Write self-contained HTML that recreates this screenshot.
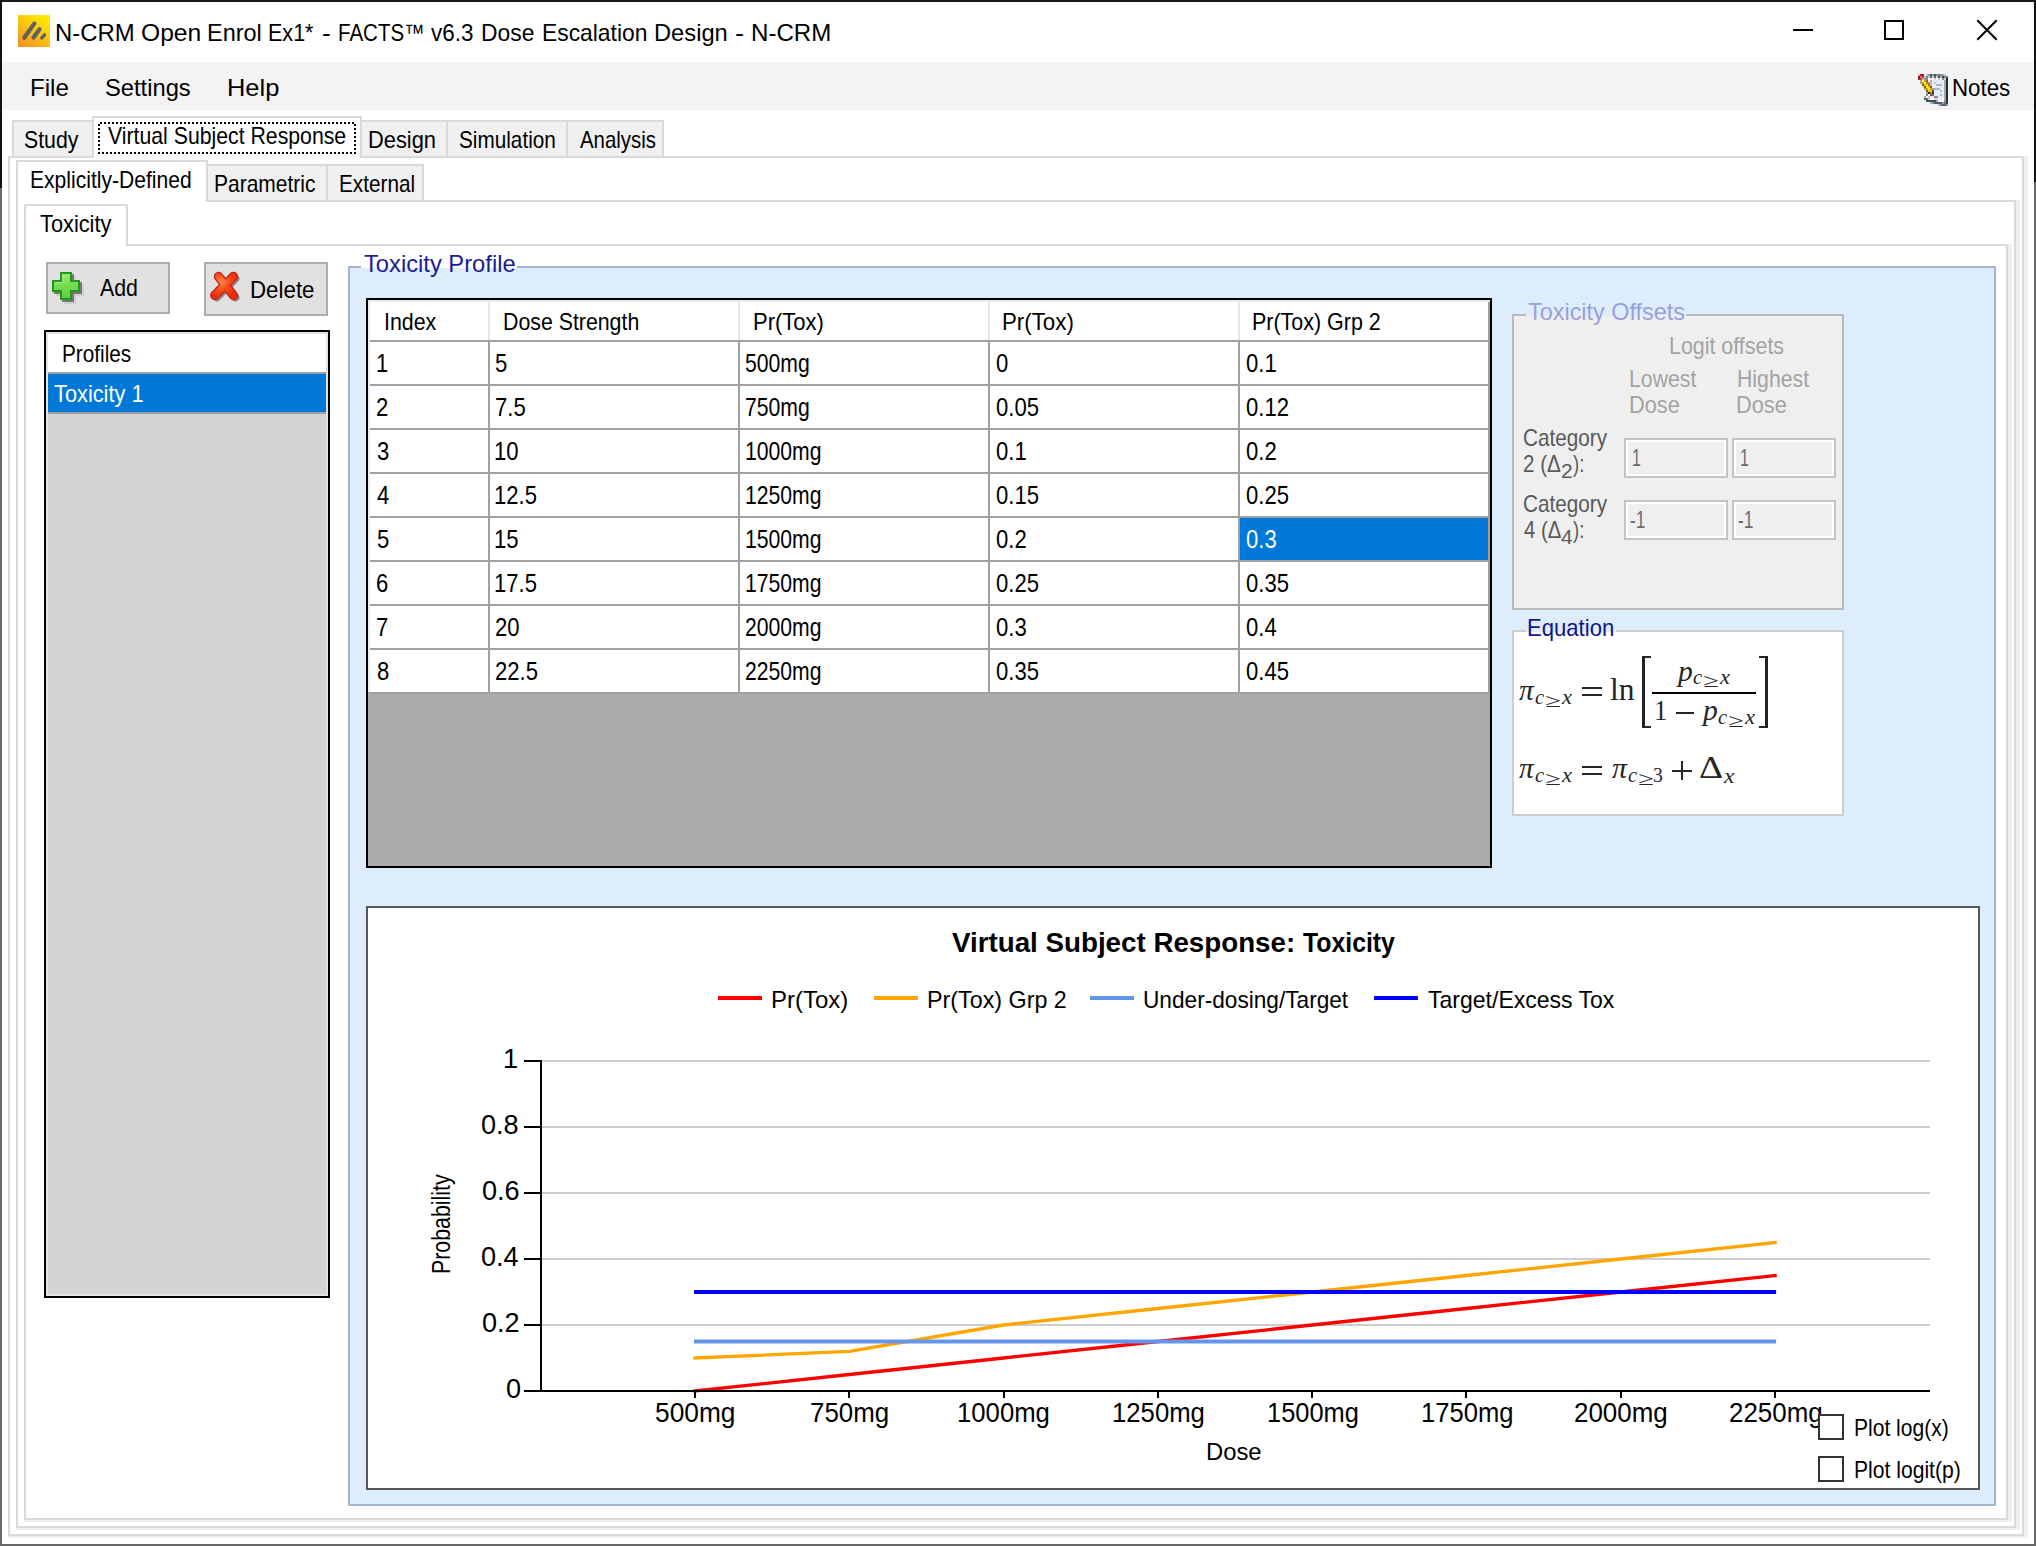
<!DOCTYPE html>
<html><head><meta charset="utf-8"><title>N-CRM Open Enrol Ex1* - FACTS v6.3 Dose Escalation Design - N-CRM</title>
<style>
html,body{margin:0;padding:0;}
body{width:2036px;height:1546px;background:#fff;position:relative;overflow:hidden;font-family:"Liberation Sans",sans-serif;}
div,span,svg{position:absolute;box-sizing:border-box;}
.t{line-height:1;white-space:pre;transform-origin:0 0;}
</style></head><body>
<!-- window frame -->
<div style="left:0px;top:0px;width:2036px;height:2px;background:#1a1a1a;"></div>
<div style="left:0px;top:0px;width:2px;height:188px;background:#111;"></div>
<div style="left:0px;top:188px;width:2px;height:1358px;background:#696969;"></div>
<div style="left:2034px;top:0px;width:2px;height:182px;background:#111;"></div>
<div style="left:2034px;top:182px;width:2px;height:1364px;background:#696969;"></div>
<div style="left:0px;top:1544px;width:2036px;height:2px;background:#696969;"></div>
<!-- title bar -->
<svg style="left:18px;top:15px" width="32" height="32" viewBox="0 0 32 32"><defs><linearGradient id="ig" x1="0.85" y1="0" x2="0.15" y2="1"><stop offset="0" stop-color="#ffec00"/><stop offset="0.5" stop-color="#f9c413"/><stop offset="1" stop-color="#f5921b"/></linearGradient></defs><rect width="32" height="32" fill="url(#ig)"/><g stroke="#606060" stroke-width="4.2" stroke-linecap="round"><path d="M6.3 22.7L16.4 8.4"/><path d="M15.6 22.5L21.5 14.2"/><path d="M23.8 22.9L26.6 19.9" stroke-width="3.4"/></g></svg>
<span class="t" style="left:55.01px;top:21px;font-size:24px;color:#000;transform:scaleX(0.9947);">N-CRM</span>
<span class="t" style="left:140.57px;top:21px;font-size:24px;color:#000;transform:scaleX(1.0250);">Open</span>
<span class="t" style="left:207.15px;top:21px;font-size:24px;color:#000;transform:scaleX(0.9771);">Enrol</span>
<span class="t" style="left:267.71px;top:21px;font-size:24px;color:#000;transform:scaleX(0.8974);">Ex1*</span>
<span class="t" style="left:321.80px;top:21px;font-size:24px;color:#000;transform:scaleX(1.1000);">-</span>
<span class="t" style="left:338.29px;top:21px;font-size:24px;color:#000;transform:scaleX(0.8549);">FACTS™</span>
<span class="t" style="left:431.30px;top:21px;font-size:24px;color:#000;transform:scaleX(0.9333);">v6.3</span>
<span class="t" style="left:480.99px;top:21px;font-size:24px;color:#000;transform:scaleX(0.9528);">Dose</span>
<span class="t" style="left:541.90px;top:21px;font-size:24px;color:#000;transform:scaleX(0.9520);">Escalation</span>
<span class="t" style="left:654.23px;top:21px;font-size:24px;color:#000;transform:scaleX(0.9873);">Design</span>
<span class="t" style="left:735.47px;top:21px;font-size:24px;color:#000;transform:scaleX(1.1333);">-</span>
<span class="t" style="left:751.09px;top:21px;font-size:24px;color:#000;transform:scaleX(1.0039);">N-CRM</span>
<div style="left:1793px;top:29px;width:20px;height:2px;background:#000;"></div>
<div style="left:1884px;top:20px;width:20px;height:20px;border:2px solid #000;"></div>
<svg style="left:1976px;top:19px" width="22" height="22" viewBox="0 0 22 22"><path d="M1.3 1.3L20.7 20.7M20.7 1.3L1.3 20.7" stroke="#000" stroke-width="2" fill="none"/></svg>
<!-- menu bar -->
<div style="left:2px;top:62px;width:2032px;height:48px;background:#f3f3f3;"></div>
<span class="t" style="left:30.39px;top:76px;font-size:24px;color:#000;transform:scaleX(1.0056);">File</span>
<span class="t" style="left:105.41px;top:76px;font-size:24px;color:#000;transform:scaleX(0.9882);">Settings</span>
<span class="t" style="left:226.58px;top:76px;font-size:24px;color:#000;transform:scaleX(1.0595);">Help</span>
<span class="t" style="left:1952.14px;top:76px;font-size:24px;color:#000;transform:scaleX(0.9283);">Notes</span>
<svg style="left:1918px;top:74px" width="30" height="32" viewBox="0 0 15 16" shape-rendering="crispEdges"><rect x="0" y="0" width="1" height="1" fill="#e8b0b0"/><rect x="1" y="0" width="1" height="1" fill="#a02820"/><rect x="2" y="0" width="1" height="1" fill="#902020"/><rect x="4" y="0" width="1" height="1" fill="#c0c4c8"/><rect x="5" y="0" width="1" height="1" fill="#909498"/><rect x="6" y="0" width="1" height="1" fill="#50565c"/><rect x="7" y="0" width="1" height="1" fill="#8a8e92"/><rect x="8" y="0" width="1" height="1" fill="#50565c"/><rect x="9" y="0" width="1" height="1" fill="#8a8e92"/><rect x="10" y="0" width="1" height="1" fill="#70767c"/><rect x="11" y="0" width="1" height="1" fill="#8a8e92"/><rect x="12" y="0" width="1" height="1" fill="#9a9ea2"/><rect x="13" y="0" width="1" height="1" fill="#c0c4c8"/><rect x="0" y="1" width="1" height="1" fill="#8a1010"/><rect x="1" y="1" width="1" height="1" fill="#ff5a4a"/><rect x="2" y="1" width="1" height="1" fill="#c03830"/><rect x="3" y="1" width="1" height="1" fill="#b8c4cc"/><rect x="4" y="1" width="1" height="1" fill="#7a848e"/><rect x="5" y="1" width="1" height="1" fill="#c4ccd4"/><rect x="6" y="1" width="1" height="1" fill="#5a646e"/><rect x="7" y="1" width="1" height="1" fill="#c4ccd4"/><rect x="8" y="1" width="1" height="1" fill="#5a646e"/><rect x="9" y="1" width="1" height="1" fill="#c4ccd4"/><rect x="10" y="1" width="1" height="1" fill="#4a545e"/><rect x="11" y="1" width="1" height="1" fill="#b0b8c0"/><rect x="12" y="1" width="1" height="1" fill="#3a444e"/><rect x="13" y="1" width="1" height="1" fill="#7a848e"/><rect x="14" y="1" width="1" height="1" fill="#6a7480"/><rect x="0" y="2" width="1" height="1" fill="#7a4040"/><rect x="1" y="2" width="1" height="1" fill="#c84848"/><rect x="2" y="2" width="1" height="1" fill="#a8b8d0"/><rect x="3" y="2" width="1" height="1" fill="#a89878"/><rect x="4" y="2" width="1" height="1" fill="#988860"/><rect x="5" y="2" width="1" height="1" fill="#ffffff"/><rect x="6" y="2" width="1" height="1" fill="#e0e4e8"/><rect x="7" y="2" width="1" height="1" fill="#ffffff"/><rect x="8" y="2" width="1" height="1" fill="#d0d4d8"/><rect x="9" y="2" width="1" height="1" fill="#ffffff"/><rect x="10" y="2" width="1" height="1" fill="#d0d4d8"/><rect x="11" y="2" width="1" height="1" fill="#ffffff"/><rect x="12" y="2" width="1" height="1" fill="#808a94"/><rect x="13" y="2" width="1" height="1" fill="#d0d6dc"/><rect x="14" y="2" width="1" height="1" fill="#1a2430"/><rect x="1" y="3" width="1" height="1" fill="#a0a8a8"/><rect x="2" y="3" width="1" height="1" fill="#f4e8c0"/><rect x="3" y="3" width="1" height="1" fill="#e0a000"/><rect x="4" y="3" width="1" height="1" fill="#906010"/><rect x="5" y="3" width="1" height="1" fill="#ffffff"/><rect x="6" y="3" width="1" height="1" fill="#e8a8a8"/><rect x="7" y="3" width="1" height="1" fill="#e8ecf4"/><rect x="8" y="3" width="1" height="1" fill="#e8ecf4"/><rect x="9" y="3" width="1" height="1" fill="#e8ecf4"/><rect x="10" y="3" width="1" height="1" fill="#e8ecf4"/><rect x="11" y="3" width="1" height="1" fill="#e8ecf4"/><rect x="12" y="3" width="1" height="1" fill="#e8ecf4"/><rect x="13" y="3" width="1" height="1" fill="#a0aab6"/><rect x="14" y="3" width="1" height="1" fill="#202c38"/><rect x="1" y="4" width="1" height="1" fill="#b0a080"/><rect x="2" y="4" width="1" height="1" fill="#e0a000"/><rect x="3" y="4" width="1" height="1" fill="#fff020"/><rect x="4" y="4" width="1" height="1" fill="#c08800"/><rect x="5" y="4" width="1" height="1" fill="#a09878"/><rect x="6" y="4" width="1" height="1" fill="#e8a8a8"/><rect x="7" y="4" width="1" height="1" fill="#e8ecf4"/><rect x="8" y="4" width="1" height="1" fill="#b8c8dc"/><rect x="9" y="4" width="1" height="1" fill="#e8ecf4"/><rect x="10" y="4" width="1" height="1" fill="#e8ecf4"/><rect x="11" y="4" width="1" height="1" fill="#e8ecf4"/><rect x="12" y="4" width="1" height="1" fill="#e8ecf4"/><rect x="13" y="4" width="1" height="1" fill="#a0aab6"/><rect x="14" y="4" width="1" height="1" fill="#202c38"/><rect x="2" y="5" width="1" height="1" fill="#806020"/><rect x="3" y="5" width="1" height="1" fill="#f0c010"/><rect x="4" y="5" width="1" height="1" fill="#ffd810"/><rect x="5" y="5" width="1" height="1" fill="#a07010"/><rect x="6" y="5" width="1" height="1" fill="#e8a8a8"/><rect x="7" y="5" width="1" height="1" fill="#e8ecf4"/><rect x="8" y="5" width="1" height="1" fill="#e8ecf4"/><rect x="9" y="5" width="1" height="1" fill="#a8b8d0"/><rect x="10" y="5" width="1" height="1" fill="#a8b8d0"/><rect x="11" y="5" width="1" height="1" fill="#a8b8d0"/><rect x="12" y="5" width="1" height="1" fill="#e8ecf4"/><rect x="13" y="5" width="1" height="1" fill="#a0aab6"/><rect x="14" y="5" width="1" height="1" fill="#202c38"/><rect x="2" y="6" width="1" height="1" fill="#e0d8c0"/><rect x="3" y="6" width="1" height="1" fill="#806020"/><rect x="4" y="6" width="1" height="1" fill="#fff020"/><rect x="5" y="6" width="1" height="1" fill="#f0c010"/><rect x="6" y="6" width="1" height="1" fill="#8a5a10"/><rect x="7" y="6" width="1" height="1" fill="#e8ecf4"/><rect x="8" y="6" width="1" height="1" fill="#e8ecf4"/><rect x="9" y="6" width="1" height="1" fill="#e8ecf4"/><rect x="10" y="6" width="1" height="1" fill="#e8ecf4"/><rect x="11" y="6" width="1" height="1" fill="#e8ecf4"/><rect x="12" y="6" width="1" height="1" fill="#e8ecf4"/><rect x="13" y="6" width="1" height="1" fill="#a0aab6"/><rect x="14" y="6" width="1" height="1" fill="#202c38"/><rect x="3" y="7" width="1" height="1" fill="#b0a070"/><rect x="4" y="7" width="1" height="1" fill="#e0a000"/><rect x="5" y="7" width="1" height="1" fill="#fff020"/><rect x="6" y="7" width="1" height="1" fill="#e0a000"/><rect x="7" y="7" width="1" height="1" fill="#a09878"/><rect x="8" y="7" width="1" height="1" fill="#a8b8d0"/><rect x="9" y="7" width="1" height="1" fill="#a8b8d0"/><rect x="10" y="7" width="1" height="1" fill="#a8b8d0"/><rect x="11" y="7" width="1" height="1" fill="#e8ecf4"/><rect x="12" y="7" width="1" height="1" fill="#e8ecf4"/><rect x="13" y="7" width="1" height="1" fill="#a0aab6"/><rect x="14" y="7" width="1" height="1" fill="#202c38"/><rect x="4" y="8" width="1" height="1" fill="#806020"/><rect x="5" y="8" width="1" height="1" fill="#f0c010"/><rect x="6" y="8" width="1" height="1" fill="#f0c010"/><rect x="7" y="8" width="1" height="1" fill="#605840"/><rect x="8" y="8" width="1" height="1" fill="#e8ecf4"/><rect x="9" y="8" width="1" height="1" fill="#e8ecf4"/><rect x="10" y="8" width="1" height="1" fill="#e8ecf4"/><rect x="11" y="8" width="1" height="1" fill="#a8b8d0"/><rect x="12" y="8" width="1" height="1" fill="#e8ecf4"/><rect x="13" y="8" width="1" height="1" fill="#a0aab6"/><rect x="14" y="8" width="1" height="1" fill="#202c38"/><rect x="4" y="9" width="1" height="1" fill="#a0a8a8"/><rect x="5" y="9" width="1" height="1" fill="#302818"/><rect x="6" y="9" width="1" height="1" fill="#a89020"/><rect x="7" y="9" width="1" height="1" fill="#383428"/><rect x="8" y="9" width="1" height="1" fill="#e8ecf4"/><rect x="9" y="9" width="1" height="1" fill="#e8ecf4"/><rect x="10" y="9" width="1" height="1" fill="#e8ecf4"/><rect x="11" y="9" width="1" height="1" fill="#e8ecf4"/><rect x="12" y="9" width="1" height="1" fill="#e8ecf4"/><rect x="13" y="9" width="1" height="1" fill="#a0aab6"/><rect x="14" y="9" width="1" height="1" fill="#202c38"/><rect x="4" y="10" width="1" height="1" fill="#8088a0"/><rect x="5" y="10" width="1" height="1" fill="#ffffff"/><rect x="6" y="10" width="1" height="1" fill="#705060"/><rect x="7" y="10" width="1" height="1" fill="#707878"/><rect x="8" y="10" width="1" height="1" fill="#e8ecf4"/><rect x="9" y="10" width="1" height="1" fill="#e8ecf4"/><rect x="10" y="10" width="1" height="1" fill="#e8ecf4"/><rect x="11" y="10" width="1" height="1" fill="#a8b8d0"/><rect x="12" y="10" width="1" height="1" fill="#e8ecf4"/><rect x="13" y="10" width="1" height="1" fill="#a0aab6"/><rect x="14" y="10" width="1" height="1" fill="#202c38"/><rect x="3" y="11" width="1" height="1" fill="#a0a8a8"/><rect x="4" y="11" width="1" height="1" fill="#ffffff"/><rect x="5" y="11" width="1" height="1" fill="#f0b0a8"/><rect x="6" y="11" width="1" height="1" fill="#f8d8d8"/><rect x="7" y="11" width="1" height="1" fill="#e8ecf4"/><rect x="8" y="11" width="1" height="1" fill="#9090a8"/><rect x="9" y="11" width="1" height="1" fill="#9090a8"/><rect x="10" y="11" width="1" height="1" fill="#e8ecf4"/><rect x="11" y="11" width="1" height="1" fill="#e8ecf4"/><rect x="12" y="11" width="1" height="1" fill="#e8ecf4"/><rect x="13" y="11" width="1" height="1" fill="#a0aab6"/><rect x="14" y="11" width="1" height="1" fill="#202c38"/><rect x="3" y="12" width="1" height="1" fill="#606468"/><rect x="4" y="12" width="1" height="1" fill="#586878"/><rect x="5" y="12" width="1" height="1" fill="#c0d0dc"/><rect x="6" y="12" width="1" height="1" fill="#ffffff"/><rect x="7" y="12" width="1" height="1" fill="#ffffff"/><rect x="8" y="12" width="1" height="1" fill="#d8d8d8"/><rect x="9" y="12" width="1" height="1" fill="#d8d8d8"/><rect x="10" y="12" width="1" height="1" fill="#e8ecf4"/><rect x="11" y="12" width="1" height="1" fill="#e8ecf4"/><rect x="12" y="12" width="1" height="1" fill="#ffffff"/><rect x="13" y="12" width="1" height="1" fill="#a0aab6"/><rect x="14" y="12" width="1" height="1" fill="#202c38"/><rect x="4" y="13" width="1" height="1" fill="#405060"/><rect x="5" y="13" width="1" height="1" fill="#405060"/><rect x="6" y="13" width="1" height="1" fill="#405060"/><rect x="7" y="13" width="1" height="1" fill="#405060"/><rect x="8" y="13" width="1" height="1" fill="#405060"/><rect x="9" y="13" width="1" height="1" fill="#90a0b0"/><rect x="10" y="13" width="1" height="1" fill="#ffffff"/><rect x="11" y="13" width="1" height="1" fill="#ffffff"/><rect x="12" y="13" width="1" height="1" fill="#ffffff"/><rect x="13" y="13" width="1" height="1" fill="#8a96a4"/><rect x="14" y="13" width="1" height="1" fill="#2a3642"/><rect x="6" y="14" width="1" height="1" fill="#b0b8c0"/><rect x="7" y="14" width="1" height="1" fill="#8a96a4"/><rect x="8" y="14" width="1" height="1" fill="#506070"/><rect x="9" y="14" width="1" height="1" fill="#506070"/><rect x="10" y="14" width="1" height="1" fill="#506070"/><rect x="11" y="14" width="1" height="1" fill="#506070"/><rect x="12" y="14" width="1" height="1" fill="#90a0b0"/><rect x="13" y="14" width="1" height="1" fill="#6a7480"/><rect x="14" y="14" width="1" height="1" fill="#36424e"/><rect x="10" y="15" width="1" height="1" fill="#b0b8c0"/><rect x="11" y="15" width="1" height="1" fill="#7a8894"/><rect x="12" y="15" width="1" height="1" fill="#506070"/><rect x="13" y="15" width="1" height="1" fill="#506070"/><rect x="14" y="15" width="1" height="1" fill="#8a96a4"/></svg>
<!-- main tabs -->
<div style="left:2024px;top:156px;width:4px;height:1382px;background:#f0f0f0;"></div>
<div style="left:8px;top:1536px;width:2020px;height:2px;background:#f0f0f0;"></div>
<div style="left:8px;top:156px;width:2016px;height:1380px;border:2px solid #d9d9d9;"></div>
<div style="left:12px;top:120px;width:82px;height:36px;background:#f0f0f0;border-top:2px solid #d9d9d9;border-right:2px solid #d9d9d9;"></div>
<div style="left:12px;top:120px;width:2px;height:36px;background:#d9d9d9;"></div>
<div style="left:362px;top:120px;width:86px;height:36px;background:#f0f0f0;border-top:2px solid #d9d9d9;border-right:2px solid #d9d9d9;"></div>
<div style="left:448px;top:120px;width:120px;height:36px;background:#f0f0f0;border-top:2px solid #d9d9d9;border-right:2px solid #d9d9d9;"></div>
<div style="left:568px;top:120px;width:96px;height:36px;background:#f0f0f0;border-top:2px solid #d9d9d9;border-right:2px solid #d9d9d9;"></div>
<div style="left:92px;top:116px;width:270px;height:42px;background:#fff;border:2px solid #d9d9d9;border-bottom:none;"></div>
<div style="left:100px;top:122px;width:256px;height:2px;background:repeating-linear-gradient(90deg,#000 0 2px,transparent 2px 4px);"></div>
<div style="left:98px;top:152px;width:258px;height:2px;background:repeating-linear-gradient(90deg,#000 0 2px,transparent 2px 4px);"></div>
<div style="left:98px;top:124px;width:2px;height:28px;background:repeating-linear-gradient(180deg,#000 0 2px,transparent 2px 4px);"></div>
<div style="left:354px;top:124px;width:2px;height:28px;background:repeating-linear-gradient(180deg,#000 0 2px,transparent 2px 4px);"></div>
<span class="t" style="left:23.51px;top:128px;font-size:24px;color:#000;transform:scaleX(0.8863);">Study</span>
<span class="t" style="left:107.78px;top:123.5px;font-size:24px;color:#000;transform:scaleX(0.8852);">Virtual Subject Response</span>
<span class="t" style="left:368.18px;top:128px;font-size:24px;color:#000;transform:scaleX(0.9099);">Design</span>
<span class="t" style="left:459.34px;top:128px;font-size:24px;color:#000;transform:scaleX(0.8639);">Simulation</span>
<span class="t" style="left:580.40px;top:128px;font-size:24px;color:#000;transform:scaleX(0.8497);">Analysis</span>
<!-- response tabs -->
<div style="left:2016px;top:200px;width:4px;height:1330px;background:#f0f0f0;"></div>
<div style="left:16px;top:1528px;width:2004px;height:2px;background:#f0f0f0;"></div>
<div style="left:16px;top:200px;width:2000px;height:1328px;border:2px solid #d9d9d9;"></div>
<div style="left:208px;top:164px;width:120px;height:36px;background:#f0f0f0;border-top:2px solid #d9d9d9;border-right:2px solid #d9d9d9;"></div>
<div style="left:328px;top:164px;width:96px;height:36px;background:#f0f0f0;border-top:2px solid #d9d9d9;border-right:2px solid #d9d9d9;"></div>
<div style="left:16px;top:160px;width:192px;height:42px;background:#fff;border:2px solid #d9d9d9;border-bottom:none;"></div>
<span class="t" style="left:30.24px;top:167.5px;font-size:24px;color:#000;transform:scaleX(0.8781);">Explicitly-Defined</span>
<span class="t" style="left:214.25px;top:171.5px;font-size:24px;color:#000;transform:scaleX(0.8742);">Parametric</span>
<span class="t" style="left:339.27px;top:171.5px;font-size:24px;color:#000;transform:scaleX(0.8639);">External</span>
<!-- endpoint tabs -->
<div style="left:2008px;top:244px;width:4px;height:1278px;background:#f0f0f0;"></div>
<div style="left:24px;top:1520px;width:1988px;height:2px;background:#f0f0f0;"></div>
<div style="left:24px;top:244px;width:1984px;height:1276px;border:2px solid #d9d9d9;"></div>
<div style="left:24px;top:204px;width:104px;height:42px;background:#fff;border:2px solid #d9d9d9;border-bottom:none;"></div>
<span class="t" style="left:39.55px;top:211.5px;font-size:24px;color:#000;transform:scaleX(0.9073);">Toxicity</span>
<!-- add / delete buttons -->
<div style="left:46px;top:262px;width:124px;height:52px;background:#e1e1e1;border:2px solid #adadad;"></div>
<div style="left:204px;top:262px;width:124px;height:54px;background:#e1e1e1;border:2px solid #adadad;"></div>
<svg style="left:52px;top:272px" width="32" height="32" viewBox="0 0 32 32"><defs><linearGradient id="pg" x1="0" y1="0" x2="0" y2="1"><stop offset="0" stop-color="#9aea78"/><stop offset="0.5" stop-color="#74dc4c"/><stop offset="1" stop-color="#5fce3c"/></linearGradient></defs><path d="M12 4H24V12H32V24H24V32H12V24H4V12H12Z" fill="#808080" opacity="0.18"/><path d="M10 2H22V10H30V22H22V30H10V22H2V10H10Z" fill="#6a646a" opacity="0.85"/><path d="M9 1H19V9H27V19H19V27H9V19H1V9H9Z" fill="url(#pg)" stroke="#1f9a1c" stroke-width="2"/><path d="M10.5 3V10.5H3" fill="none" stroke="#b4f09a" stroke-width="1" opacity="0.8"/></svg>
<span class="t" style="left:99.90px;top:276px;font-size:24px;color:#000;transform:scaleX(0.8878);">Add</span>
<svg style="left:208px;top:270px" width="36" height="36" viewBox="0 0 36 36"><defs><radialGradient id="xg" cx="0.35" cy="0.3" r="0.8"><stop offset="0" stop-color="#ff8a4a"/><stop offset="0.5" stop-color="#f8501c"/><stop offset="1" stop-color="#e8300c"/></radialGradient></defs><path d="M10.6 6.6L25.4 25.4M25.4 6.6L6.8 25.4" stroke="#5a5a5a" stroke-width="8" stroke-linecap="round" opacity="0.65" transform="translate(2,2)"/><path d="M10.6 6.6L25.4 25.4M25.4 6.6L6.8 25.4" stroke="#cf2020" stroke-width="9.6" stroke-linecap="round"/><path d="M10.6 6.6L25.4 25.4M25.4 6.6L6.8 25.4" stroke="url(#xg)" stroke-width="6.8" stroke-linecap="round"/></svg>
<span class="t" style="left:250.34px;top:278px;font-size:24px;color:#000;transform:scaleX(0.9298);">Delete</span>
<!-- profiles list -->
<div style="left:44px;top:330px;width:286px;height:968px;background:#d3d3d3;border:2px solid #000;"></div>
<div style="left:46px;top:332px;width:282px;height:964px;border:2px solid #e3e3e3;"></div>
<div style="left:48px;top:334px;width:278px;height:38px;background:#fff;"></div>
<div style="left:48px;top:372px;width:278px;height:2px;background:#a0a0a0;"></div>
<div style="left:48px;top:374px;width:278px;height:38px;background:#0078d7;"></div>
<div style="left:48px;top:412px;width:278px;height:2px;background:#a0a0a0;"></div>
<span class="t" style="left:62.07px;top:342px;font-size:24px;color:#000;transform:scaleX(0.8647);">Profiles</span>
<span class="t" style="left:53.95px;top:382px;font-size:24px;color:#fff;transform:scaleX(0.9072);">Toxicity 1</span>
<!-- Toxicity Profile group -->
<div style="left:348px;top:266px;width:1648px;height:1240px;background:#deedfd;border:2px solid #a3b5cc;"></div>
<div style="left:361px;top:260px;width:156px;height:10px;background:#fff;"></div>
<div style="left:361px;top:268px;width:156px;height:4px;background:#deedfd;"></div>
<span class="t" style="left:363.81px;top:251.5px;font-size:24px;color:#1c1c96;transform:scaleX(0.9885);">Toxicity Profile</span>
<!-- dose table -->
<div style="left:366px;top:298px;width:1126px;height:570px;background:#ababab;border:2px solid #000;"></div>
<div style="left:368px;top:300px;width:1122px;height:2px;background:#ececec;"></div>
<div style="left:368px;top:300px;width:2px;height:392px;background:#ececec;"></div>
<div style="left:370px;top:302px;width:1118px;height:38px;background:#fff;"></div>
<div style="left:370px;top:342px;width:1118px;height:350px;background:#fff;"></div>
<div style="left:488px;top:302px;width:2px;height:38px;background:#e5e5e5;"></div>
<div style="left:488px;top:340px;width:2px;height:352px;background:#a0a0a0;"></div>
<div style="left:738px;top:302px;width:2px;height:38px;background:#e5e5e5;"></div>
<div style="left:738px;top:340px;width:2px;height:352px;background:#a0a0a0;"></div>
<div style="left:988px;top:302px;width:2px;height:38px;background:#e5e5e5;"></div>
<div style="left:988px;top:340px;width:2px;height:352px;background:#a0a0a0;"></div>
<div style="left:1238px;top:302px;width:2px;height:38px;background:#e5e5e5;"></div>
<div style="left:1238px;top:340px;width:2px;height:352px;background:#a0a0a0;"></div>
<div style="left:1488px;top:302px;width:2px;height:390px;background:#a0a0a0;"></div>
<div style="left:370px;top:340px;width:1120px;height:2px;background:#a0a0a0;"></div>
<div style="left:370px;top:384px;width:1120px;height:2px;background:#a0a0a0;"></div>
<div style="left:370px;top:428px;width:1120px;height:2px;background:#a0a0a0;"></div>
<div style="left:370px;top:472px;width:1120px;height:2px;background:#a0a0a0;"></div>
<div style="left:370px;top:516px;width:1120px;height:2px;background:#a0a0a0;"></div>
<div style="left:370px;top:560px;width:1120px;height:2px;background:#a0a0a0;"></div>
<div style="left:370px;top:604px;width:1120px;height:2px;background:#a0a0a0;"></div>
<div style="left:370px;top:648px;width:1120px;height:2px;background:#a0a0a0;"></div>
<div style="left:370px;top:692px;width:1120px;height:2px;background:#a0a0a0;"></div>
<div style="left:1240px;top:518px;width:248px;height:42px;background:#0078d7;"></div>
<span class="t" style="left:384.40px;top:310px;font-size:24px;color:#000;transform:scaleX(0.8907);">Index</span>
<span class="t" style="left:503.22px;top:310px;font-size:24px;color:#000;transform:scaleX(0.8881);">Dose Strength</span>
<span class="t" style="left:752.57px;top:310px;font-size:24px;color:#000;transform:scaleX(0.9166);">Pr(Tox)</span>
<span class="t" style="left:1002.14px;top:310px;font-size:24px;color:#000;transform:scaleX(0.9288);">Pr(Tox)</span>
<span class="t" style="left:1252.41px;top:310px;font-size:24px;color:#000;transform:scaleX(0.8943);">Pr(Tox) Grp 2</span>
<span class="t" style="left:375.73px;top:350.5px;font-size:25px;color:#000;transform:scaleX(0.8830);">1</span>
<span class="t" style="left:495.22px;top:350.5px;font-size:25px;color:#000;transform:scaleX(0.8830);">5</span>
<span class="t" style="left:745.35px;top:350.5px;font-size:25px;color:#000;transform:scaleX(0.8470);">500mg</span>
<span class="t" style="left:995.72px;top:350.5px;font-size:25px;color:#000;transform:scaleX(0.8830);">0</span>
<span class="t" style="left:1246.02px;top:350.5px;font-size:25px;color:#000;transform:scaleX(0.8830);">0.1</span>
<span class="t" style="left:376.40px;top:394.5px;font-size:25px;color:#000;transform:scaleX(0.8830);">2</span>
<span class="t" style="left:495.00px;top:394.5px;font-size:25px;color:#000;transform:scaleX(0.8830);">7.5</span>
<span class="t" style="left:745.14px;top:394.5px;font-size:25px;color:#000;transform:scaleX(0.8470);">750mg</span>
<span class="t" style="left:995.72px;top:394.5px;font-size:25px;color:#000;transform:scaleX(0.8830);">0.05</span>
<span class="t" style="left:1246.02px;top:394.5px;font-size:25px;color:#000;transform:scaleX(0.8830);">0.12</span>
<span class="t" style="left:376.62px;top:438.5px;font-size:25px;color:#000;transform:scaleX(0.8830);">3</span>
<span class="t" style="left:494.33px;top:438.5px;font-size:25px;color:#000;transform:scaleX(0.8830);">10</span>
<span class="t" style="left:744.51px;top:438.5px;font-size:25px;color:#000;transform:scaleX(0.8470);">1000mg</span>
<span class="t" style="left:995.72px;top:438.5px;font-size:25px;color:#000;transform:scaleX(0.8830);">0.1</span>
<span class="t" style="left:1246.02px;top:438.5px;font-size:25px;color:#000;transform:scaleX(0.8830);">0.2</span>
<span class="t" style="left:377.06px;top:482.5px;font-size:25px;color:#000;transform:scaleX(0.8830);">4</span>
<span class="t" style="left:494.33px;top:482.5px;font-size:25px;color:#000;transform:scaleX(0.8830);">12.5</span>
<span class="t" style="left:744.51px;top:482.5px;font-size:25px;color:#000;transform:scaleX(0.8470);">1250mg</span>
<span class="t" style="left:995.72px;top:482.5px;font-size:25px;color:#000;transform:scaleX(0.8830);">0.15</span>
<span class="t" style="left:1246.02px;top:482.5px;font-size:25px;color:#000;transform:scaleX(0.8830);">0.25</span>
<span class="t" style="left:376.62px;top:526.5px;font-size:25px;color:#000;transform:scaleX(0.8830);">5</span>
<span class="t" style="left:494.33px;top:526.5px;font-size:25px;color:#000;transform:scaleX(0.8830);">15</span>
<span class="t" style="left:744.51px;top:526.5px;font-size:25px;color:#000;transform:scaleX(0.8470);">1500mg</span>
<span class="t" style="left:995.72px;top:526.5px;font-size:25px;color:#000;transform:scaleX(0.8830);">0.2</span>
<span class="t" style="left:1246.02px;top:526.5px;font-size:25px;color:#fff;transform:scaleX(0.8830);">0.3</span>
<span class="t" style="left:376.40px;top:570.5px;font-size:25px;color:#000;transform:scaleX(0.8830);">6</span>
<span class="t" style="left:494.33px;top:570.5px;font-size:25px;color:#000;transform:scaleX(0.8830);">17.5</span>
<span class="t" style="left:744.51px;top:570.5px;font-size:25px;color:#000;transform:scaleX(0.8470);">1750mg</span>
<span class="t" style="left:995.72px;top:570.5px;font-size:25px;color:#000;transform:scaleX(0.8830);">0.25</span>
<span class="t" style="left:1246.02px;top:570.5px;font-size:25px;color:#000;transform:scaleX(0.8830);">0.35</span>
<span class="t" style="left:376.40px;top:614.5px;font-size:25px;color:#000;transform:scaleX(0.8830);">7</span>
<span class="t" style="left:495.00px;top:614.5px;font-size:25px;color:#000;transform:scaleX(0.8830);">20</span>
<span class="t" style="left:745.14px;top:614.5px;font-size:25px;color:#000;transform:scaleX(0.8470);">2000mg</span>
<span class="t" style="left:995.72px;top:614.5px;font-size:25px;color:#000;transform:scaleX(0.8830);">0.3</span>
<span class="t" style="left:1246.02px;top:614.5px;font-size:25px;color:#000;transform:scaleX(0.8830);">0.4</span>
<span class="t" style="left:376.62px;top:658.5px;font-size:25px;color:#000;transform:scaleX(0.8830);">8</span>
<span class="t" style="left:495.00px;top:658.5px;font-size:25px;color:#000;transform:scaleX(0.8830);">22.5</span>
<span class="t" style="left:745.14px;top:658.5px;font-size:25px;color:#000;transform:scaleX(0.8470);">2250mg</span>
<span class="t" style="left:995.72px;top:658.5px;font-size:25px;color:#000;transform:scaleX(0.8830);">0.35</span>
<span class="t" style="left:1246.02px;top:658.5px;font-size:25px;color:#000;transform:scaleX(0.8830);">0.45</span>
<!-- Toxicity Offsets group -->
<div style="left:1512px;top:314px;width:332px;height:296px;background:#efefef;border:2px solid #b9b9b9;"></div>
<div style="left:1526px;top:308px;width:160px;height:10px;background:#deedfd;"></div>
<div style="left:1526px;top:316px;width:160px;height:4px;background:#efefef;"></div>
<span class="t" style="left:1527.81px;top:300px;font-size:24px;color:#9aa0dc;transform:scaleX(0.9759);">Toxicity Offsets</span>
<span class="t" style="left:1668.52px;top:333.5px;font-size:24px;color:#a3a3a3;transform:scaleX(0.8919);">Logit offsets</span>
<span class="t" style="left:1628.73px;top:367px;font-size:24px;color:#a3a3a3;transform:scaleX(0.8851);">Lowest</span>
<span class="t" style="left:1628.68px;top:393px;font-size:24px;color:#a3a3a3;transform:scaleX(0.9075);">Dose</span>
<span class="t" style="left:1736.53px;top:367px;font-size:24px;color:#a3a3a3;transform:scaleX(0.8858);">Highest</span>
<span class="t" style="left:1736.48px;top:393px;font-size:24px;color:#a3a3a3;transform:scaleX(0.9075);">Dose</span>
<span class="t" style="left:1522.82px;top:425.5px;font-size:24px;color:#5a5a5a;transform:scaleX(0.8634);">Category</span>
<span class="t" style="left:1523.13px;top:452px;font-size:24px;color:#5a5a5a;transform:scaleX(0.8595);">2 (Δ</span>
<span class="t" style="left:1561.25px;top:460.5px;font-size:20px;color:#5a5a5a;transform:scaleX(1.0486);">2</span>
<span class="t" style="left:1573.01px;top:452px;font-size:24px;color:#5a5a5a;transform:scaleX(0.7673);">):</span>
<span class="t" style="left:1522.82px;top:492px;font-size:24px;color:#5a5a5a;transform:scaleX(0.8634);">Category</span>
<span class="t" style="left:1523.78px;top:518px;font-size:24px;color:#5a5a5a;transform:scaleX(0.8444);">4 (Δ</span>
<span class="t" style="left:1561.48px;top:526.5px;font-size:20px;color:#5a5a5a;transform:scaleX(1.0400);">4</span>
<span class="t" style="left:1573.01px;top:518px;font-size:24px;color:#5a5a5a;transform:scaleX(0.7673);">):</span>
<div style="left:1624px;top:438px;width:104px;height:40px;background:#efefef;border:2px solid #c4c4c4;box-shadow:inset 0 0 0 2px #fff;"></div>
<div style="left:1624px;top:500px;width:104px;height:40px;background:#efefef;border:2px solid #c4c4c4;box-shadow:inset 0 0 0 2px #fff;"></div>
<div style="left:1732px;top:438px;width:104px;height:40px;background:#efefef;border:2px solid #c4c4c4;box-shadow:inset 0 0 0 2px #fff;"></div>
<div style="left:1732px;top:500px;width:104px;height:40px;background:#efefef;border:2px solid #c4c4c4;box-shadow:inset 0 0 0 2px #fff;"></div>
<span class="t" style="left:1631.83px;top:445.5px;font-size:24px;color:#6d6d6d;transform:scaleX(0.6667);">1</span>
<span class="t" style="left:1739.83px;top:445.5px;font-size:24px;color:#6d6d6d;transform:scaleX(0.6667);">1</span>
<span class="t" style="left:1629.77px;top:507.5px;font-size:24px;color:#6d6d6d;transform:scaleX(0.7273);">-1</span>
<span class="t" style="left:1737.77px;top:507.5px;font-size:24px;color:#6d6d6d;transform:scaleX(0.7273);">-1</span>
<!-- Equation group -->
<div style="left:1512px;top:630px;width:332px;height:186px;background:#fff;border:2px solid #cdcdcd;"></div>
<div style="left:1526px;top:624px;width:90px;height:10px;background:#deedfd;"></div>
<div style="left:1526px;top:632px;width:90px;height:4px;background:#fff;"></div>
<span class="t" style="left:1527.36px;top:615.5px;font-size:24px;color:#14148c;transform:scaleX(0.9205);">Equation</span>
<span class="t" style="left:1519.16px;top:675px;font-size:30px;color:#262626;font-family:'Liberation Serif',serif;font-style:italic;transform:scaleX(0.9742);">π</span>
<span class="t" style="left:1534.91px;top:687px;font-size:21px;color:#262626;font-family:'Liberation Serif',serif;font-style:italic;transform:scaleX(0.9765);">c</span>
<span class="t" style="left:1545.28px;top:691px;font-size:19px;color:#262626;font-family:'Liberation Serif',serif;transform:scaleX(1.5000);">≥</span>
<span class="t" style="left:1561.67px;top:687px;font-size:21px;color:#262626;font-family:'Liberation Serif',serif;font-style:italic;transform:scaleX(1.0737);">x</span>
<div style="left:1582px;top:687px;width:20px;height:2px;background:#262626;"></div>
<div style="left:1582px;top:694px;width:20px;height:2px;background:#262626;"></div>
<span class="t" style="left:1610.49px;top:674px;font-size:31px;color:#262626;font-family:'Liberation Serif',serif;transform:scaleX(1.0174);">ln</span>
<div style="left:1642px;top:656px;width:9px;height:72px;border:2px solid #222;border-left-width:3px;border-right:none;"></div>
<div style="left:1759px;top:656px;width:9px;height:72px;border:2px solid #222;border-right-width:3px;border-left:none;"></div>
<div style="left:1652px;top:692px;width:104px;height:2px;background:#000;"></div>
<span class="t" style="left:1678.22px;top:655.5px;font-size:30px;color:#262626;font-family:'Liberation Serif',serif;font-style:italic;transform:scaleX(0.9841);">p</span>
<span class="t" style="left:1693.11px;top:667px;font-size:21px;color:#262626;font-family:'Liberation Serif',serif;font-style:italic;transform:scaleX(0.9765);">c</span>
<span class="t" style="left:1703.47px;top:671px;font-size:19px;color:#262626;font-family:'Liberation Serif',serif;transform:scaleX(1.5000);">≥</span>
<span class="t" style="left:1719.87px;top:667px;font-size:21px;color:#262626;font-family:'Liberation Serif',serif;font-style:italic;transform:scaleX(1.0737);">x</span>
<span class="t" style="left:1654.29px;top:695px;font-size:30px;color:#262626;font-family:'Liberation Serif',serif;transform:scaleX(0.8837);">1</span>
<div style="left:1676px;top:712px;width:18px;height:2px;background:#262626;"></div>
<span class="t" style="left:1702.72px;top:695px;font-size:30px;color:#262626;font-family:'Liberation Serif',serif;font-style:italic;transform:scaleX(0.9841);">p</span>
<span class="t" style="left:1717.91px;top:707px;font-size:21px;color:#262626;font-family:'Liberation Serif',serif;font-style:italic;transform:scaleX(0.9765);">c</span>
<span class="t" style="left:1728.28px;top:711px;font-size:19px;color:#262626;font-family:'Liberation Serif',serif;transform:scaleX(1.5000);">≥</span>
<span class="t" style="left:1744.67px;top:707px;font-size:21px;color:#262626;font-family:'Liberation Serif',serif;font-style:italic;transform:scaleX(1.0737);">x</span>
<span class="t" style="left:1519.16px;top:752.5px;font-size:30px;color:#262626;font-family:'Liberation Serif',serif;font-style:italic;transform:scaleX(0.9742);">π</span>
<span class="t" style="left:1534.91px;top:765px;font-size:21px;color:#262626;font-family:'Liberation Serif',serif;font-style:italic;transform:scaleX(0.9765);">c</span>
<span class="t" style="left:1545.28px;top:769px;font-size:19px;color:#262626;font-family:'Liberation Serif',serif;transform:scaleX(1.5000);">≥</span>
<span class="t" style="left:1561.67px;top:765px;font-size:21px;color:#262626;font-family:'Liberation Serif',serif;font-style:italic;transform:scaleX(1.0737);">x</span>
<div style="left:1582px;top:766px;width:20px;height:2px;background:#262626;"></div>
<div style="left:1582px;top:773px;width:20px;height:2px;background:#262626;"></div>
<span class="t" style="left:1612.05px;top:752.5px;font-size:30px;color:#262626;font-family:'Liberation Serif',serif;font-style:italic;transform:scaleX(0.9935);">π</span>
<span class="t" style="left:1627.71px;top:765px;font-size:21px;color:#262626;font-family:'Liberation Serif',serif;font-style:italic;transform:scaleX(0.9765);">c</span>
<span class="t" style="left:1638.08px;top:769px;font-size:19px;color:#262626;font-family:'Liberation Serif',serif;transform:scaleX(1.5000);">≥</span>
<span class="t" style="left:1652.72px;top:765px;font-size:20px;color:#262626;font-family:'Liberation Serif',serif;transform:scaleX(0.9818);">3</span>
<div style="left:1672px;top:769.5px;width:20px;height:2.0px;background:#262626;"></div>
<div style="left:1681px;top:761px;width:2px;height:19px;background:#262626;"></div>
<span class="t" style="left:1699.19px;top:751.5px;font-size:31px;color:#262626;font-family:'Liberation Serif',serif;transform:scaleX(1.2114);">Δ</span>
<span class="t" style="left:1723.98px;top:766px;font-size:21px;color:#262626;font-family:'Liberation Serif',serif;font-style:italic;transform:scaleX(1.1158);">x</span>
<!-- chart -->
<div style="left:366px;top:906px;width:1614px;height:584px;background:#fff;border:2px solid #585858;"></div>
<span class="t" style="left:952.24px;top:929.5px;font-size:27px;color:#000;font-family:'Liberation Sans',sans-serif;font-weight:bold;transform:scaleX(1.0273);">Virtual Subject Response:</span>
<span class="t" style="left:1302.87px;top:929.5px;font-size:27px;color:#000;font-family:'Liberation Sans',sans-serif;font-weight:bold;transform:scaleX(0.9186);">Toxicity</span>
<div style="left:718px;top:996px;width:44px;height:4px;background:#ff0000;"></div>
<span class="t" style="left:770.70px;top:987.5px;font-size:24px;color:#000;transform:scaleX(0.9993);">Pr(Tox)</span>
<div style="left:874px;top:996px;width:44px;height:4px;background:#ffa500;"></div>
<span class="t" style="left:926.96px;top:987.5px;font-size:24px;color:#000;transform:scaleX(0.9709);">Pr(Tox) Grp 2</span>
<div style="left:1090px;top:996px;width:44px;height:4px;background:#6495ed;"></div>
<span class="t" style="left:1143.25px;top:987.5px;font-size:24px;color:#000;transform:scaleX(0.9434);">Under-dosing/Target</span>
<div style="left:1374px;top:996px;width:44px;height:4px;background:#0000ff;"></div>
<span class="t" style="left:1427.92px;top:987.5px;font-size:24px;color:#000;transform:scaleX(0.9592);">Target/Excess Tox</span>
<svg style="left:0;top:0" width="2036" height="1546" viewBox="0 0 2036 1546"><g shape-rendering="crispEdges"><rect x="542" y="1324" width="1388" height="2" fill="#cdcdcd"/><rect x="542" y="1258" width="1388" height="2" fill="#cdcdcd"/><rect x="542" y="1192" width="1388" height="2" fill="#cdcdcd"/><rect x="542" y="1126" width="1388" height="2" fill="#cdcdcd"/><rect x="542" y="1060" width="1388" height="2" fill="#cdcdcd"/></g><polyline points="695.0,1391.0 849.3,1374.5 1003.6,1358.0 1157.9,1341.5 1312.2,1325.0 1466.5,1308.5 1620.8,1292.0 1775.1,1275.5" fill="none" stroke="#ff0000" stroke-width="3.3" stroke-linejoin="round" stroke-linecap="square"/><polyline points="695.0,1358.0 849.3,1351.4 1003.6,1325.0 1157.9,1308.5 1312.2,1292.0 1466.5,1275.5 1620.8,1259.0 1775.1,1242.5" fill="none" stroke="#ffa500" stroke-width="3.3" stroke-linejoin="round" stroke-linecap="square"/><rect x="694.0" y="1339.5" width="1082.1" height="4" fill="#6495ed"/><rect x="694.0" y="1290.0" width="1082.1" height="4" fill="#0000ff"/><g shape-rendering="crispEdges" fill="#000"><rect x="540" y="1060" width="2" height="332"/><rect x="524" y="1390" width="1406" height="2"/><rect x="524" y="1324" width="16" height="2"/><rect x="524" y="1258" width="16" height="2"/><rect x="524" y="1192" width="16" height="2"/><rect x="524" y="1126" width="16" height="2"/><rect x="524" y="1060" width="16" height="2"/><rect x="694" y="1392" width="2" height="6"/><rect x="848" y="1392" width="2" height="6"/><rect x="1003" y="1392" width="2" height="6"/><rect x="1157" y="1392" width="2" height="6"/><rect x="1311" y="1392" width="2" height="6"/><rect x="1465" y="1392" width="2" height="6"/><rect x="1620" y="1392" width="2" height="6"/><rect x="1774" y="1392" width="2" height="6"/></g></svg>
<span class="t" style="left:506.05px;top:1375.0px;font-size:28px;color:#000;transform:scaleX(0.9687);">0</span>
<span class="t" style="left:481.67px;top:1309.0px;font-size:28px;color:#000;transform:scaleX(0.9687);">0.2</span>
<span class="t" style="left:481.19px;top:1243.0px;font-size:28px;color:#000;transform:scaleX(0.9687);">0.4</span>
<span class="t" style="left:481.67px;top:1177.0px;font-size:28px;color:#000;transform:scaleX(0.9687);">0.6</span>
<span class="t" style="left:481.43px;top:1111.0px;font-size:28px;color:#000;transform:scaleX(0.9687);">0.8</span>
<span class="t" style="left:502.90px;top:1045.0px;font-size:28px;color:#000;transform:scaleX(0.9687);">1</span>
<span class="t" style="left:655.38px;top:1399px;font-size:28px;color:#000;transform:scaleX(0.9394);">500mg</span>
<span class="t" style="left:810.21px;top:1399px;font-size:28px;color:#000;transform:scaleX(0.9240);">750mg</span>
<span class="t" style="left:957.41px;top:1399px;font-size:28px;color:#000;transform:scaleX(0.9183);">1000mg</span>
<span class="t" style="left:1111.71px;top:1399px;font-size:28px;color:#000;transform:scaleX(0.9183);">1250mg</span>
<span class="t" style="left:1266.53px;top:1399px;font-size:28px;color:#000;transform:scaleX(0.9080);">1500mg</span>
<span class="t" style="left:1420.57px;top:1399px;font-size:28px;color:#000;transform:scaleX(0.9131);">1750mg</span>
<span class="t" style="left:1574.46px;top:1399px;font-size:28px;color:#000;transform:scaleX(0.9258);">2000mg</span>
<span class="t" style="left:1728.76px;top:1399px;font-size:28px;color:#000;transform:scaleX(0.9258);">2250mg</span>
<span class="t" style="left:1206.02px;top:1439.5px;font-size:24px;color:#000;transform:scaleX(0.9925);">Dose</span>
<span class="t" style="left:428.5px;top:1273.7px;font-size:25px;transform:rotate(-90deg) scaleX(0.8540);">Probability</span>
<div style="left:1818px;top:1414px;width:26px;height:26px;background:#fff;border:2px solid #333;"></div>
<div style="left:1818px;top:1456px;width:26px;height:26px;background:#fff;border:2px solid #333;"></div>
<span class="t" style="left:1854.45px;top:1416px;font-size:24px;color:#000;transform:scaleX(0.8766);">Plot log(x)</span>
<span class="t" style="left:1854.44px;top:1458px;font-size:24px;color:#000;transform:scaleX(0.8797);">Plot logit(p)</span>
</body></html>
